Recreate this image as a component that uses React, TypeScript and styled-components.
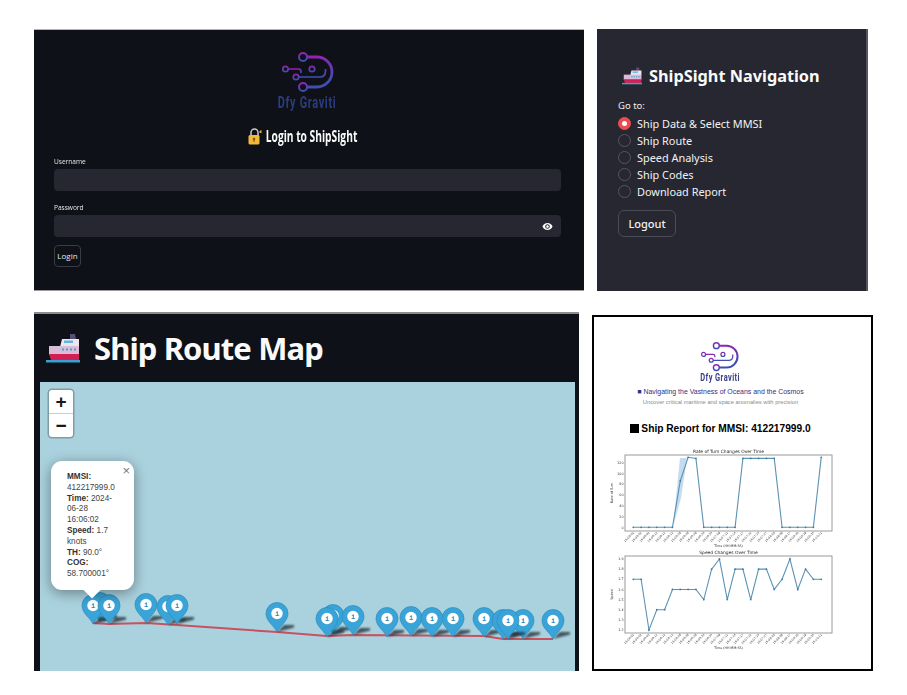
import React from 'react';
import styled, { createGlobalStyle } from 'styled-components';

const GlobalStyle = createGlobalStyle`
  html, body { margin: 0; padding: 0; background: #fff; }
  body { font-family: 'Noto Sans', sans-serif; }
`;

const Page = styled.div`
  width: 907px;
  height: 695px;
  padding: 29px 0 0 34px;
  box-sizing: border-box;
  display: flex;
  flex-direction: column;
  gap: 21px;
  overflow: hidden;
`;

const Row = styled.div`
  display: flex;
  gap: 13px;
  align-items: flex-start;
`;

/* ---------- login ---------- */
const LoginPanel = styled.section`
  width: 550px;
  height: 262px;
  box-sizing: border-box;
  background: #0e1117;
  padding: 22px 23px 0 20px;
  border-top: 1px solid #b5b5b5;
  border-bottom: 1px solid #9a9a9a;
  color: #fafafa;
`;

const LogoBlock = styled.div`
  display: flex;
  flex-direction: column;
  align-items: center;
`;

const LogoText = styled.div<{ $small?: boolean }>`
  font-family: 'Roboto', sans-serif;
  font-weight: 700;
  font-size: ${p => (p.$small ? '11px' : '16px')};
  line-height: ${p => (p.$small ? '9px' : '14px')};
  letter-spacing: ${p => (p.$small ? '0.6px' : '1px')};
  color: ${p => (p.$small ? '#3b4088' : '#2c3c80')};
  margin-top: ${p => (p.$small ? '1px' : '3px')};
  transform: scaleX(0.68);
  white-space: nowrap;
`;

const LoginTitle = styled.h2`
  margin: 17px 0 0;
  padding-right: 9px;
  height: 18px;
  display: flex;
  justify-content: center;
  align-items: center;
  gap: 4px;
  font: 700 16px/18px 'Open Sans', sans-serif;
`;

const Squeezed = styled.span`
  display: inline-block;
  transform: scaleX(0.64);
  white-space: nowrap;
  margin: 0 -26px;
`;

const FieldLabel = styled.label`
  display: block;
  font: 400 8px/10px 'Open Sans', sans-serif;
  color: #e6e6e6;
  transform: scaleX(0.82);
  transform-origin: left center;
  margin-bottom: 3px;
`;

const Field = styled.div<{ $top: number }>`
  margin-top: ${p => p.$top}px;
`;

const InputBox = styled.div`
  height: 22px;
  background: #262730;
  border-radius: 4px;
  display: flex;
  align-items: center;
  justify-content: flex-end;
  padding-right: 8px;
`;

const LoginButton = styled.button`
  display: block;
  margin-top: 8px;
  width: 27px;
  height: 22px;
  padding: 0;
  background: #0e1117;
  color: #e8e8e8;
  border: 1px solid #3a3c46;
  border-radius: 4px;
  font: 400 8px/10px 'Open Sans', sans-serif;
`;

/* ---------- navigation ---------- */
const NavPanel = styled.nav`
  width: 271px;
  height: 262px;
  box-sizing: border-box;
  background: #262730;
  border-right: 2px solid #55565c;
  padding: 36px 0 0 21px;
  color: #fafafa;
`;

const NavTitle = styled.div`
  display: flex;
  align-items: center;
  gap: 7px;
  height: 22px;
  margin-left: 4px;
  font: 700 16.3px/22px 'Noto Sans', sans-serif;
`;

const GoTo = styled.div`
  margin-top: 12px;
  font: 400 9.5px/14px 'Noto Sans', sans-serif;
  color: #f0f0f0;
`;

const RadioList = styled.div`
  margin-top: 2px;
  display: flex;
  flex-direction: column;
`;

const RadioRow = styled.div`
  height: 17px;
  display: flex;
  align-items: center;
  gap: 6px;
  font: 400 10.9px/17px 'Noto Sans', sans-serif;
  color: #f2f2f2;
`;

const RadioDot = styled.span<{ $on?: boolean }>`
  width: 13px;
  height: 13px;
  box-sizing: border-box;
  border-radius: 50%;
  display: flex;
  align-items: center;
  justify-content: center;
  background: ${p => (p.$on ? '#ee4b4f' : '#262730')};
  border: 1px solid ${p => (p.$on ? '#ee4b4f' : '#55565f')};
  &::after {
    content: '';
    width: 5px;
    height: 5px;
    border-radius: 50%;
    background: ${p => (p.$on ? '#fff' : 'transparent')};
  }
`;

const LogoutButton = styled.button`
  display: block;
  margin-top: 10px;
  width: 58px;
  height: 27px;
  padding: 0;
  background: #262730;
  color: #f2f2f2;
  border: 1px solid #4a4b54;
  border-radius: 6px;
  font: 500 11px/14px 'Noto Sans', sans-serif;
`;

/* ---------- map ---------- */
const MapPanel = styled.section`
  width: 545px;
  height: 359px;
  box-sizing: border-box;
  background: #0e1117;
  border-top: 2px solid #8c8c8c;
  padding: 0 4px 0 6px;
`;

const MapHeader = styled.h1`
  margin: 0;
  height: 68px;
  display: flex;
  align-items: center;
  gap: 14px;
  padding: 0 0 0 6px;
  color: #fafafa;
  font: 700 31px/40px 'Noto Sans', sans-serif;
  letter-spacing: -0.9px;
`;

const MapCanvas = styled.div`
  position: relative;
  height: 289px;
  background: #aad2de;
  overflow: hidden;
`;

const RouteLine = styled.svg`
  position: absolute;
  inset: 0;
`;

const ZoomControl = styled.div`
  position: absolute;
  left: 9px;
  top: 8px;
  width: 24px;
  display: flex;
  flex-direction: column;
  background: #fff;
  border-radius: 3px;
  box-shadow: 0 0 0 1.5px rgba(0, 0, 0, 0.25);
`;

const ZoomButton = styled.div<{ $last?: boolean }>`
  height: 23px;
  display: flex;
  align-items: center;
  justify-content: center;
  font: 700 19px/23px 'Liberation Sans', sans-serif;
  color: #1a1a1a;
  border-bottom: ${p => (p.$last ? 'none' : '1px solid #ccc')};
`;

const PinWrap = styled.svg<{ $x: number; $y: number }>`
  position: absolute;
  left: ${p => p.$x - 12}px;
  top: ${p => p.$y - 30}px;
`;

const PinShadow = styled.path`
  fill: #1c2a33;
  opacity: 0.75;
  filter: blur(0.8px);
`;

const Popup = styled.div`
  position: absolute;
  left: 11px;
  top: 79px;
  width: 83px;
  height: 129px;
  box-sizing: border-box;
  padding: 11px 14px 0 16px;
  background: #fff;
  border-radius: 11px;
  box-shadow: 0 3px 14px rgba(0, 0, 0, 0.4);
  font: 400 8.2px/10.8px 'Liberation Sans', sans-serif;
  color: #444;
  strong {
    color: #333;
  }
  &::after {
    content: '';
    position: absolute;
    left: 35px;
    bottom: -6px;
    width: 12px;
    height: 12px;
    background: #fff;
    transform: rotate(45deg);
  }
`;

const PopupClose = styled.span`
  position: absolute;
  right: 4px;
  top: 3px;
  font: 400 13px/13px 'Liberation Sans', sans-serif;
  color: #777;
`;

/* ---------- report ---------- */
const ReportPanel = styled.section`
  width: 281px;
  height: 356px;
  margin-top: 3px;
  box-sizing: border-box;
  border: 2px solid #000;
  background: #fff;
  padding: 25px 24px 0 0;
  display: flex;
  flex-direction: column;
  align-items: center;
`;

const Tagline = styled.div`
  margin-top: 5px;
  font: 400 6.95px/10px 'Liberation Sans', sans-serif;
  color: #2f3180;
  white-space: nowrap;
`;

const SubTagline = styled.div`
  font: 400 5.75px/10px 'Liberation Sans', sans-serif;
  color: #8a8a8a;
  white-space: nowrap;
`;

const ReportHeading = styled.h3`
  margin: 14px 0 0;
  display: flex;
  align-items: center;
  gap: 2px;
  height: 16px;
  font: 700 10.2px/16px 'Liberation Sans', sans-serif;
  color: #000;
  white-space: nowrap;
`;

const HeadingMark = styled.span`
  width: 9px;
  height: 9px;
  background: #000;
`;

const Charts = styled.div`
  margin-top: 11px;
  align-self: flex-start;
  margin-left: 16px;
  display: flex;
  flex-direction: column;
  filter: blur(0.45px);
`;

function Logo({ width }: { width: number }) {
  const id = `logo-grad-${width}`;
  return (
    <svg width={width} height={width * (41 / 52)} viewBox="0 0 52 41" fill="none">
      <defs>
        <linearGradient id={id} x1="0" y1="0" x2="0.3" y2="1">
          <stop offset="0" stopColor="#9a1fb0" />
          <stop offset="1" stopColor="#3f4fb0" />
        </linearGradient>
      </defs>
      <g stroke={`url(#${id})`} strokeWidth="1.7">
        <circle cx="21" cy="5" r="4" strokeWidth="2" />
        <circle cx="21" cy="35" r="4" strokeWidth="2" />
        <circle cx="3.5" cy="17" r="2.7" />
        <circle cx="30" cy="17" r="2.7" />
        <circle cx="14" cy="25" r="2.7" />
        <path d="M25 5H35A15 15 0 0 1 35 35H25" strokeWidth="2.800" />
        <path d="M6.2 17H16.5Q19 17 19 19.500V21" />
        <path d="M33 17H50" />
        <path d="M16.800 25H38Q43.500 25 43.500 19V17" />
      </g>
    </svg>
  );
}

function ShipIcon({ width }: { width: number }) {
  return (
    <svg width={width} height={width * (30 / 34)} viewBox="0 0 34 30">
      <path d="M24 1h5l1 5h-6z" fill="#5b4a72" />
      <path d="M16 6h17v8H14z" fill="#efe3ee" />
      <path d="M18 7.500h9v2.500h-9z" fill="#5cb8e0" />
      <path d="M3 13h30v9H3z" fill="#d9bcd6" />
      <g fill="#4f9fd0">
        <rect x="16" y="15.500" width="2" height="2" />
        <rect x="20" y="15.500" width="2" height="2" />
        <rect x="24" y="15.500" width="2" height="2" />
        <rect x="28" y="15.500" width="2" height="2" />
      </g>
      <path d="M3 21h30v6H5z" fill="#d21f55" />
      <path d="M0 27h34v2.500H0z" fill="#3aa0cf" />
    </svg>
  );
}

function LockIcon() {
  return (
    <svg width="14" height="17" viewBox="0 0 14 17">
      <path d="M3 8V4.500a3.500 3.500 0 0 1 7 0V8" fill="none" stroke="#c9c9c9" strokeWidth="1.5" />
      <rect x="0.500" y="7" width="11" height="9.500" rx="1.500" fill="#f2b93c" />
      <circle cx="6" cy="11" r="1.300" fill="#7a5410" />
      <rect x="5.500" y="11" width="1" height="3" fill="#7a5410" />
      <path d="M11.500 3l2-1v3h-2z" fill="#e0b040" />
    </svg>
  );
}

function EyeIcon() {
  return (
    <svg width="11" height="11" viewBox="0 0 24 24" fill="#fafafa">
      <path d="M12 4.500C7 4.500 2.730 7.610 1 12c1.730 4.390 6 7.500 11 7.500s9.270-3.110 11-7.500c-1.730-4.390-6-7.500-11-7.500zM12 17c-2.760 0-5-2.240-5-5s2.240-5 5-5 5 2.240 5 5-2.240 5-5 5zm0-8c-1.660 0-3 1.340-3 3s1.340 3 3 3 3-1.340 3-3-1.340-3-3-3z" />
    </svg>
  );
}

function Pin({ x, y }: { x: number; y: number }) {
  return (
    <PinWrap $x={x} $y={y} width="44" height="32" viewBox="0 0 44 32">
      <PinShadow d="M12 30L29 25.500L29 23L19 23z" />
      <path
        d="M12 30C9.500 24 1 19.500 1 11.500a11 11 0 0 1 22 0C23 19.500 14.500 24 12 30z"
        fill="#3aa4d8"
        stroke="#2b8cbb"
        strokeWidth="0.7"
      />
      <circle cx="12" cy="11.500" r="5.700" fill="#fff" />
      <text x="12" y="14" textAnchor="middle" fontSize="7" fontWeight="700" fontFamily="Liberation Mono, monospace" fill="#2b8cbb">
        i
      </text>
    </PinWrap>
  );
}

// page coordinates of pin tips, taken off the map
const ORIGIN = { x: 40, y: 382 };
const PINS = [
  [100, 622], [93, 624], [109, 624], [146, 623], [168, 625], [177, 624], [277, 632],
  [333, 634], [327, 637], [353, 635], [387, 637], [411, 636], [432, 637], [453, 637],
  [484, 637], [503, 639], [523, 639], [508, 639], [553, 639],
];
const ROUTE = [
  [93, 623], [109, 624], [146, 623], [177, 625], [277, 632], [327, 636], [353, 635],
  [484, 636], [503, 639], [553, 639],
];

const TIMES = [
  '16:06:02', '16:06:02', '16:06:02', '16:06:12', '16:06:12', '16:06:12', '16:06:28', '16:06:28', '16:06:28',
  '16:06:34', '16:06:34', '16:07:08', '16:07:12', '16:07:14', '16:07:17', '16:07:22', '16:07:24', '16:07:27',
  '16:08:03', '16:08:08', '16:08:17', '16:09:20', '16:09:28', '16:09:34', '16:10:11',
];

const TURN = [0, 0, 0, 0, 0, 0, 86, 130, 128, 0, 0, 0, 0, 0, 128, 128, 128, 128, 128, 0, 0, 0, 0, 0, 130];
const SPEED = [1.7, 1.7, 1.2, 1.4, 1.4, 1.6, 1.6, 1.6, 1.6, 1.5, 1.8, 1.9, 1.5, 1.8, 1.8, 1.5, 1.8, 1.8, 1.6, 1.7, 1.9, 1.6, 1.8, 1.7, 1.7];

type ChartProps = {
  title: string;
  yLabel: string;
  data: number[];
  ticks: number[];
  fmt: (v: number) => string;
  // value to pixel: y of the first tick and y of the last tick
  y0: number;
  y1: number;
  height: number;
  boxBottom: number;
  band?: string;
};

function Chart({ title, yLabel, data, ticks, fmt, y0, y1, height, boxBottom, band }: ChartProps) {
  const left = 15;
  const right = 222;
  const top = 7;
  const xAt = (i: number) => 23.3 + i * 7.83;
  const yAt = (v: number) => y0 + ((v - ticks[0]) / (ticks[ticks.length - 1] - ticks[0])) * (y1 - y0);
  const pts = data.map((v, i) => `${xAt(i)},${yAt(v)}`).join(' ');
  return (
    <svg width="232" height={height} viewBox={`0 0 232 ${height}`} fontFamily="DejaVu Sans, sans-serif">
      <text x={(left + right) / 2} y="5" textAnchor="middle" fontSize="4.400" fill="#222">
        {title}
      </text>
      <rect x={left} y={top} width={right - left} height={boxBottom - top} fill="#fff" stroke="#9a9a9a" strokeWidth="1" />
      {band && <polygon points={band} fill="#c5dcee" />}
      {ticks.map(t => (
        <text key={t} x={left - 1.500} y={yAt(t) + 1.200} textAnchor="end" fontSize="3.300" fill="#333">
          {fmt(t)}
        </text>
      ))}
      <text
        transform={`translate(3 ${(top + boxBottom) / 2}) rotate(-90)`}
        textAnchor="middle"
        fontSize="3.400"
        fill="#333"
      >
        {yLabel}
      </text>
      <polyline points={pts} fill="none" stroke="#5b93b3" strokeWidth="1.100" />
      {data.map((v, i) => (
        <circle key={i} cx={xAt(i)} cy={yAt(v)} r="0.900" fill="#3b7ea8" />
      ))}
      {TIMES.map((t, i) => (
        <text
          key={i}
          transform={`translate(${xAt(i) + 1} ${boxBottom + 2}) rotate(-45)`}
          textAnchor="end"
          fontSize="2.900"
          fill="#444"
        >
          {t}
        </text>
      ))}
      <text x={(left + right) / 2} y={boxBottom + 15.500} textAnchor="middle" fontSize="3.300" fill="#333">
        Time (HH:MM:SS)
      </text>
    </svg>
  );
}

const NAV_ITEMS = ['Ship Data & Select MMSI', 'Ship Route', 'Speed Analysis', 'Ship Codes', 'Download Report'];

export default function App() {
  return (
    <>
      <GlobalStyle />
      <Page>
        <Row>
          <LoginPanel>
            <LogoBlock>
              <Logo width={52} />
              <LogoText>Dfy Graviti</LogoText>
            </LogoBlock>
            <LoginTitle>
              <LockIcon />
              <Squeezed>Login to ShipSight</Squeezed>
            </LoginTitle>
            <Field $top={11}>
              <FieldLabel>Username</FieldLabel>
              <InputBox />
            </Field>
            <Field $top={11}>
              <FieldLabel>Password</FieldLabel>
              <InputBox>
                <EyeIcon />
              </InputBox>
            </Field>
            <LoginButton>Login</LoginButton>
          </LoginPanel>

          <NavPanel>
            <NavTitle>
              <ShipIcon width={20} />
              ShipSight Navigation
            </NavTitle>
            <GoTo>Go to:</GoTo>
            <RadioList>
              {NAV_ITEMS.map((item, i) => (
                <RadioRow key={item}>
                  <RadioDot $on={i === 0} />
                  {item}
                </RadioRow>
              ))}
            </RadioList>
            <LogoutButton>Logout</LogoutButton>
          </NavPanel>
        </Row>

        <Row>
          <MapPanel>
            <MapHeader>
              <ShipIcon width={34} />
              Ship Route Map
            </MapHeader>
            <MapCanvas>
              <RouteLine width="535" height="289" viewBox="0 0 535 289">
                <polyline
                  points={ROUTE.map(([x, y]) => `${x - ORIGIN.x},${y - ORIGIN.y}`).join(' ')}
                  fill="none"
                  stroke="#c9515f"
                  strokeWidth="2"
                />
              </RouteLine>
              {PINS.map(([x, y], i) => (
                <Pin key={i} x={x - ORIGIN.x} y={y - ORIGIN.y} />
              ))}
              <ZoomControl>
                <ZoomButton>+</ZoomButton>
                <ZoomButton $last>−</ZoomButton>
              </ZoomControl>
              <Popup>
                <PopupClose>×</PopupClose>
                <strong>MMSI:</strong>
                <br />
                412217999.0
                <br />
                <strong>Time:</strong> 2024-
                <br />
                06-28
                <br />
                16:06:02
                <br />
                <strong>Speed:</strong> 1.7
                <br />
                knots
                <br />
                <strong>TH:</strong> 90.0°
                <br />
                <strong>COG:</strong>
                <br />
                58.700001°
              </Popup>
            </MapCanvas>
          </MapPanel>

          <ReportPanel>
            <LogoBlock>
              <Logo width={38} />
              <LogoText $small>Dfy Graviti</LogoText>
            </LogoBlock>
            <Tagline>■ Navigating the Vastness of Oceans and the Cosmos</Tagline>
            <SubTagline>Uncover critical maritime and space anomalies with precision</SubTagline>
            <ReportHeading>
              <HeadingMark />
              Ship Report for MMSI: 412217999.0
            </ReportHeading>
            <Charts>
              <Chart
                title="Rate of Turn Changes Over Time"
                yLabel="Rate of Turn"
                data={TURN}
                ticks={[0, 20, 40, 60, 80, 100, 120]}
                fmt={v => String(v)}
                y0={79.3}
                y1={14.7}
                height={101}
                boxBottom={83}
                band="63,79 70,10 77,10 71,50"
              />
              <Chart
                title="Speed Changes Over Time"
                yLabel="Speed"
                data={SPEED}
                ticks={[1.2, 1.3, 1.4, 1.5, 1.6, 1.7, 1.8, 1.9]}
                fmt={v => v.toFixed(1)}
                y0={81}
                y1={10}
                height={103}
                boxBottom={84}
              />
            </Charts>
          </ReportPanel>
        </Row>
      </Page>
    </>
  );
}
